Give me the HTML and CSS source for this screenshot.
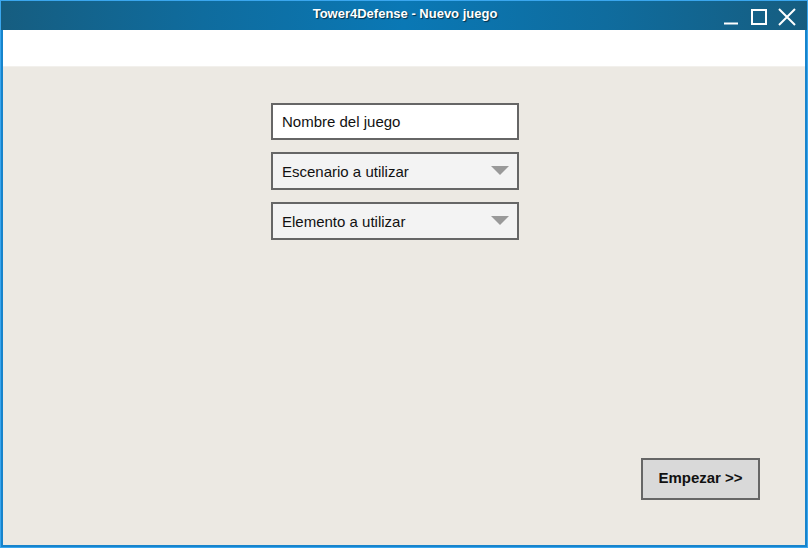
FILE: index.html
```html
<!DOCTYPE html>
<html lang="es">
<head>
<meta charset="utf-8">
<title>Tower4Defense - Nuevo juego</title>
<link rel="stylesheet" href="styles.css">
</head>
<body>
<div class="window">
  <div class="titlebar">
    <span></span>
    <span class="title">Tower4Defense - Nuevo juego</span>
    <div class="controls">
      <svg class="ctl" width="18" height="18" viewBox="0 0 18 18"><path d="M2 15.5H16" stroke="#fff" stroke-width="2" fill="none"/></svg>
      <svg class="ctl" width="18" height="18" viewBox="0 0 18 18"><rect x="2" y="2" width="14" height="14" stroke="#fff" stroke-width="2" fill="none"/></svg>
      <svg class="ctl" width="18" height="18" viewBox="0 0 18 18"><path d="M1 1L17 17M17 1L1 17" stroke="#fff" stroke-width="2" fill="none"/></svg>
    </div>
  </div>
  <div class="frame">
    <div class="toolbar"></div>
    <div class="content">
      <div class="form">
        <div class="field input">Nombre del juego</div>
        <div class="field select">Escenario a utilizar<span class="arrow"></span></div>
        <div class="field select">Elemento a utilizar<span class="arrow"></span></div>
      </div>
      <div class="actions">
        <button class="btn">Empezar &gt;&gt;</button>
      </div>
    </div>
  </div>
</div>
</body>
</html>
```
FILE: styles.css
```css
* { box-sizing: border-box; }
html, body { margin: 0; padding: 0; }
body {
  width: 808px;
  height: 548px;
  font-family: "Liberation Sans", Arial, sans-serif;
  overflow: hidden;
}
.window {
  width: 808px;
  height: 548px;
  border: 1px solid #3aa6ee;
  display: flex;
  flex-direction: column;
  background: #1580c8;
}
.titlebar {
  height: 29px;
  flex: 0 0 29px;
  display: grid;
  grid-template-columns: 1fr auto 1fr;
  align-items: center;
  background: linear-gradient(90deg, #165d80 0%, #0f6c9e 25%, #0a78b5 50%, #0f6c9e 75%, #165d80 100%);
  color: #fff;
}
.title {
  font-weight: bold;
  font-size: 13px;
  text-shadow: 1px 1px 1px rgba(0,0,0,0.6);
  padding-bottom: 4px;
  padding-left: 2px;
}
.controls {
  justify-self: end;
  display: flex;
  align-items: center;
  gap: 10px;
  padding-right: 11px;
  padding-top: 2px;
}
.ctl { display: block; }
.frame {
  flex: 1;
  display: flex;
  flex-direction: column;
  border: 2px solid #1784cc;
  border-top: none;
}
.toolbar {
  height: 37px;
  flex: 0 0 37px;
  background: #fff;
  border-bottom: 1px solid #f2f0ec;
}
.content {
  flex: 1;
  background: #ece9e3;
  display: flex;
  flex-direction: column;
  padding: 36px 45px 45px 268px;
}
.form {
  width: 248px;
  display: flex;
  flex-direction: column;
  gap: 12px;
}
.field {
  height: 38px;
  border: 2px solid #666;
  font-size: 15px;
  color: #111;
  display: flex;
  align-items: center;
  padding-left: 9px;
  position: relative;
}
.input { background: #fff; height: 37px; padding-bottom: 1px; }
.select { background: #f3f3f3; }
.arrow {
  position: absolute;
  right: 8px;
  top: 12px;
  width: 0;
  height: 0;
  border-left: 9.5px solid transparent;
  border-right: 9.5px solid transparent;
  border-top: 9px solid #999;
}
.actions {
  margin-top: auto;
  display: flex;
  justify-content: flex-end;
}
.btn {
  width: 119px;
  height: 42px;
  background: #d9d9d9;
  border: 2px solid #666;
  font-family: "Liberation Sans", Arial, sans-serif;
  font-weight: bold;
  font-size: 15px;
  color: #111;
  padding: 0 0 3px 0;
}
```
